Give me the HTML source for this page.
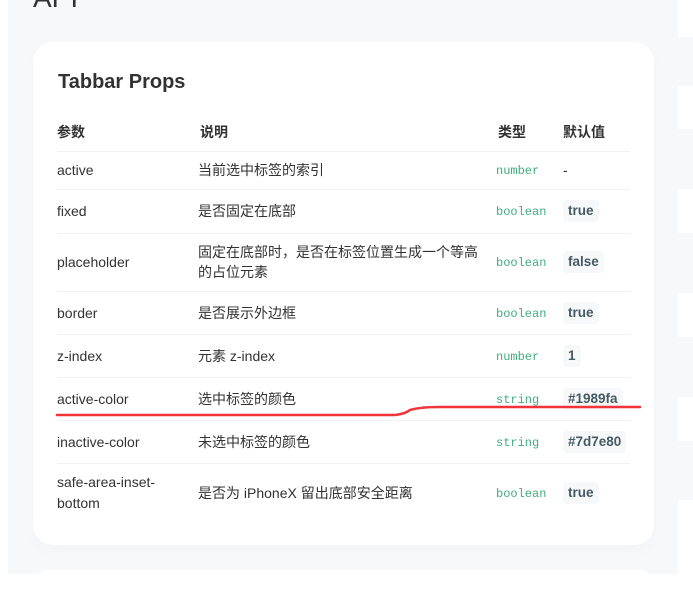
<!DOCTYPE html>
<html><head><meta charset="utf-8"><style>
*{margin:0;padding:0;box-sizing:border-box}
body{width:693px;height:574px;overflow:hidden;background:#fff;font-family:"Liberation Sans","Noto Sans CJK SC",sans-serif;color:#323233;position:relative}
.bg{position:absolute;left:8px;top:0;width:670px;height:574px;background:#f7f8fa}
.strip{position:absolute;left:678px;width:15px;background:#f7f8fa}
.api{position:absolute;left:33px;top:-18px;font-size:28px;color:#323233}
.card{position:absolute;left:33px;top:42px;width:621px;height:503px;background:#fff;border-radius:20px;box-shadow:0 6px 16px rgba(0,0,0,.02)}
.card2{position:absolute;left:33px;top:570px;width:621px;height:30px;background:#fff;border-radius:20px}
.t{position:absolute;font-size:14px;white-space:nowrap;line-height:20px}
.h{font-weight:bold;font-size:14px}
.line{position:absolute;left:57px;width:573px;height:1px;background:#f0f1f3}
.ty{position:absolute;font-family:"Liberation Mono","DejaVu Sans Mono",monospace;font-size:12px;color:#3eaf7c;line-height:20px}
.df{position:absolute;font-size:13.5px;font-weight:bold;color:#455a64;background:#f7f8fa;border-radius:4px;padding:0 5px;line-height:22px}
</style></head><body>
<div class="bg"></div>
<div class="strip" style="top:37px;height:49px"></div>
<div class="strip" style="top:129px;height:60px"></div>
<div class="strip" style="top:233px;height:60px"></div>
<div class="strip" style="top:337px;height:60px"></div>
<div class="strip" style="top:441px;height:59px"></div>
<div class="api">API</div>
<div class="card"></div>
<div class="card2"></div>
<div class="t" style="left:58px;top:69px;font-size:20px;font-weight:bold;line-height:26px">Tabbar Props</div>
<div class="t h" style="left:57px;top:122px">参数</div>
<div class="t h" style="left:200px;top:122px">说明</div>
<div class="t h" style="left:498px;top:122px">类型</div>
<div class="t h" style="left:563px;top:122px">默认值</div>
<div class="line" style="top:151px"></div>
<div class="line" style="top:189px"></div>
<div class="line" style="top:233px"></div>
<div class="line" style="top:291px"></div>
<div class="line" style="top:334px"></div>
<div class="line" style="top:377px"></div>
<div class="line" style="top:420px"></div>
<div class="line" style="top:463px"></div>

<div class="t" style="left:57px;top:160px">active</div>
<div class="t" style="left:198px;top:160px">当前选中标签的索引</div>
<div class="ty" style="left:496px;top:161px">number</div>
<div class="t" style="left:563px;top:160px">-</div>

<div class="t" style="left:57px;top:201px">fixed</div>
<div class="t" style="left:198px;top:201px">是否固定在底部</div>
<div class="ty" style="left:496px;top:202px">boolean</div>
<div class="df" style="left:563px;top:200px">true</div>

<div class="t" style="left:57px;top:252px">placeholder</div>
<div class="t" style="left:198px;top:242px">固定在底部时，是否在标签位置生成一个等高</div>
<div class="t" style="left:198px;top:262px">的占位元素</div>
<div class="ty" style="left:496px;top:253px">boolean</div>
<div class="df" style="left:563px;top:251px">false</div>

<div class="t" style="left:57px;top:303px">border</div>
<div class="t" style="left:198px;top:303px">是否展示外边框</div>
<div class="ty" style="left:496px;top:304px">boolean</div>
<div class="df" style="left:563px;top:302px">true</div>

<div class="t" style="left:57px;top:346px">z-index</div>
<div class="t" style="left:198px;top:346px">元素 z-index</div>
<div class="ty" style="left:496px;top:347px">number</div>
<div class="df" style="left:563px;top:345px">1</div>

<div class="t" style="left:57px;top:389px">active-color</div>
<div class="t" style="left:198px;top:389px">选中标签的颜色</div>
<div class="ty" style="left:496px;top:390px">string</div>
<div class="df" style="left:563px;top:388px">#1989fa</div>

<div class="t" style="left:57px;top:432px">inactive-color</div>
<div class="t" style="left:198px;top:432px">未选中标签的颜色</div>
<div class="ty" style="left:496px;top:433px">string</div>
<div class="df" style="left:563px;top:431px">#7d7e80</div>

<div class="t" style="left:57px;top:472px">safe-area-inset-</div>
<div class="t" style="left:57px;top:493px">bottom</div>
<div class="t" style="left:198px;top:483px">是否为 iPhoneX 留出底部安全距离</div>
<div class="ty" style="left:496px;top:484px">boolean</div>
<div class="df" style="left:563px;top:482px">true</div>

<svg style="position:absolute;left:0;top:0" width="693" height="574">
<path d="M57 415 L395 415 Q405 414 410 410 Q420 407 440 407 L640 407" stroke="#f0343a" stroke-width="2.5" fill="none" stroke-linecap="round"/>
</svg>
</body></html>
